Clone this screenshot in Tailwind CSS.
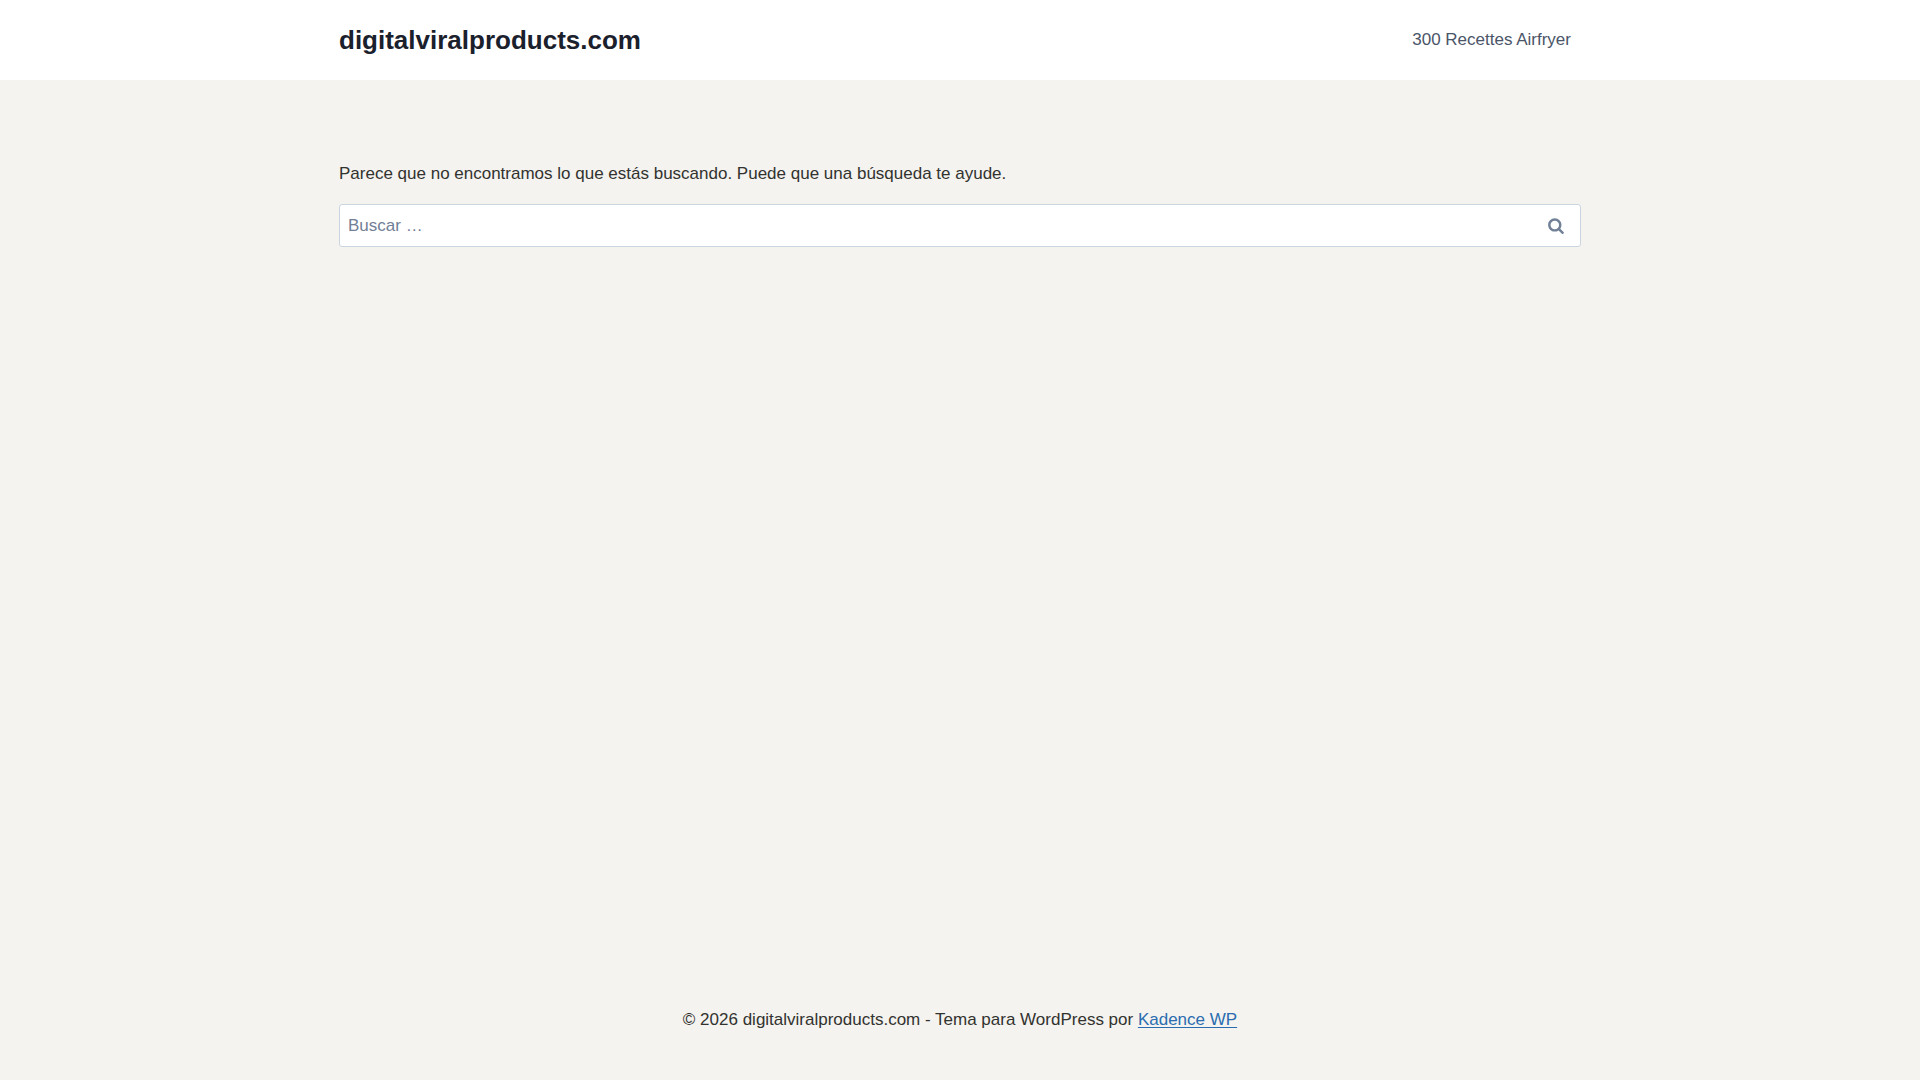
<!DOCTYPE html>
<html lang="es">
<head>
<meta charset="utf-8">
<meta name="viewport" content="width=device-width, initial-scale=1">
<title>digitalviralproducts.com</title>
<script src="https://cdn.jsdelivr.net/npm/@tailwindcss/browser@4"></script>
</head>
<body class="flex min-h-screen flex-col bg-[#f4f3ef] font-['Liberation_Sans',Arial,sans-serif] text-[17px] leading-7 text-[#32322f]">
  <header class="bg-white">
    <div class="mx-auto flex h-20 max-w-[1290px] items-center justify-between px-6">
      <a href="#" class="text-[26px] leading-[31px] font-bold text-[#1a202c]">digitalviralproducts.com</a>
      <nav><a href="#" class="px-[10px] py-2 text-[#4a5568]">300 Recettes Airfryer</a></nav>
    </div>
  </header>
  <main class="mx-auto w-full max-w-[1290px] grow px-6 pt-20">
    <p class="mb-4">Parece que no encontramos lo que estás buscando. Puede que una búsqueda te ayude.</p>
    <form role="search" class="relative">
      <input type="search" aria-label="Buscar" placeholder="Buscar …" class="block h-[43px] w-full rounded-[3px] border border-[#cbd5e0] bg-white py-2 pr-16 pl-2 placeholder:text-[#718096]">
      <button type="submit" aria-label="Buscar" class="absolute inset-y-0 right-0 flex w-[50px] items-center justify-center text-[#718096]">
        <svg class="h-[17px] w-4" viewBox="0 0 26 28" fill="currentColor" aria-hidden="true"><path d="M18 13c0-3.859-3.141-7-7-7s-7 3.141-7 7 3.141 7 7 7 7-3.141 7-7zM26 26c0 1.094-0.906 2-2 2-0.531 0-1.047-0.219-1.406-0.594l-5.359-5.344c-1.828 1.266-4.016 1.937-6.234 1.937-6.078 0-11-4.922-11-11s4.922-11 11-11 11 4.922 11 11c0 2.219-0.672 4.406-1.937 6.234l5.359 5.359c0.359 0.359 0.578 0.875 0.578 1.406z"/></svg>
      </button>
    </form>
  </main>
  <footer class="mx-auto w-full max-w-[1290px] px-6 pt-8 pb-[46px] text-center">
    <p>© 2026 digitalviralproducts.com - Tema para WordPress por <a href="#" class="text-[#2b6cb0] underline underline-offset-2">Kadence WP</a></p>
  </footer>
</body>
</html>
